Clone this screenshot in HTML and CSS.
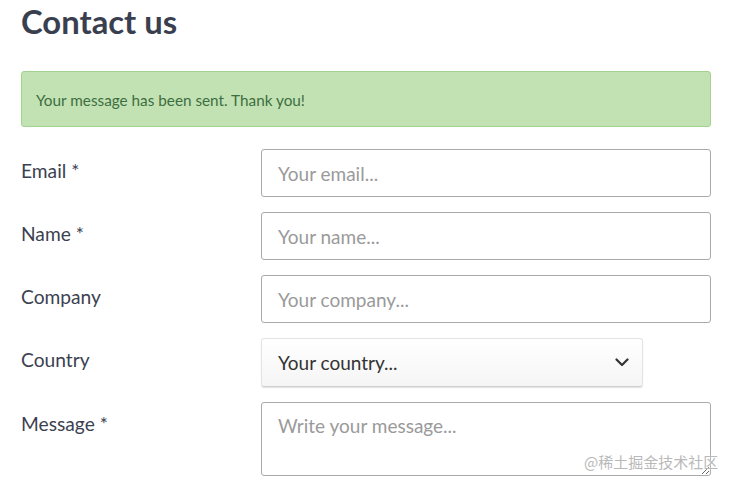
FILE: index.html
```html
<!DOCTYPE html>
<html lang="en">
<head>
<meta charset="utf-8">
<title>Contact us</title>
<link rel="stylesheet" href="styles.css">
</head>
<body>
<main class="page">
  <h1 class="title">Contact us</h1>
  <div class="alert">Your message has been sent. Thank you!</div>
  <form class="form">
    <div class="row">
      <label class="label" for="email">Email *</label>
      <input class="field" id="email" type="text" placeholder="Your email...">
    </div>
    <div class="row">
      <label class="label" for="name">Name *</label>
      <input class="field" id="name" type="text" placeholder="Your name...">
    </div>
    <div class="row">
      <label class="label" for="company">Company</label>
      <input class="field" id="company" type="text" placeholder="Your company...">
    </div>
    <div class="row">
      <label class="label" for="country">Country</label>
      <div class="select">
        <span class="select-text">Your country...</span>
        <svg class="chevron" width="14" height="9" viewBox="0 0 14 9"><path d="M1.5 1.5 L7 7 L12.5 1.5" fill="none" stroke="#333" stroke-width="2.2" stroke-linecap="round" stroke-linejoin="round"/></svg>
      </div>
    </div>
    <div class="row">
      <label class="label" for="message">Message *</label>
      <textarea class="field area" id="message" placeholder="Write your message..."></textarea>
    </div>
  </form>
  <div class="watermark">@稀土掘金技术社区</div>
</main>
</body>
</html>
```

FILE: styles.css
```css
html, body {
  margin: 0;
  padding: 0;
  background: #fff;
}
body {
  font-family: Lato, "Open Sans", "Noto Sans CJK SC", sans-serif;
  color: #3b4151;
}
.page {
  position: relative;
  width: 690px;
  padding: 0 28px 0 21px;
  height: 485px;
  overflow: hidden;
}
.title {
  margin: 0;
  padding-top: 2px;
  font-size: 32.8px;
  line-height: 40px;
  font-weight: 700;
  color: #3a3f4f;
}
.alert {
  margin-top: 29px;
  box-sizing: border-box;
  height: 56px;
  background: #c2e2b4;
  border: 1px solid #a2d28f;
  border-radius: 3px;
  color: #3d6e3f;
  font-size: 15.3px;
  display: flex;
  align-items: center;
  padding-left: 14px;
  padding-top: 1px;
}
.form {
  margin-top: 22px;
  display: flex;
  flex-direction: column;
  gap: 15px;
}
.row {
  display: flex;
  align-items: flex-start;
}
.label {
  width: 240px;
  flex: none;
  font-size: 19.2px;
  line-height: 22px;
  padding-top: 11px;
  color: #3b4151;
}
.field {
  box-sizing: border-box;
  width: 450px;
  height: 48px;
  margin: 0;
  border: 1px solid #aaaaaa;
  border-radius: 3px;
  padding: 0 16px;
  font-family: inherit;
  font-size: 19px;
  color: #333;
  background: #fff;
  outline: none;
}
.field::placeholder {
  color: #9a9a9a;
}
.select {
  box-sizing: border-box;
  width: 382px;
  height: 49px;
  border: 1px solid #e3e3e3;
  border-bottom-color: #cfcfcf;
  border-radius: 3px;
  background: linear-gradient(#ffffff, #f5f5f5);
  box-shadow: 0 1px 1px rgba(0, 0, 0, 0.12);
  display: flex;
  align-items: center;
  justify-content: space-between;
  padding: 0 13px 0 16px;
}
.select-text {
  font-size: 19px;
  color: #333;
}
.chevron {
  display: block;
}
.area {
  height: 74px;
  padding-top: 12px;
  resize: both;
  line-height: 22px;
}
.watermark {
  position: absolute;
  left: 584px;
  top: 451px;
  font-size: 15px;
  color: #b9b9b9;
  font-family: "Noto Sans CJK SC", sans-serif;
  text-shadow: 0 0 2px #fff;
}
```
